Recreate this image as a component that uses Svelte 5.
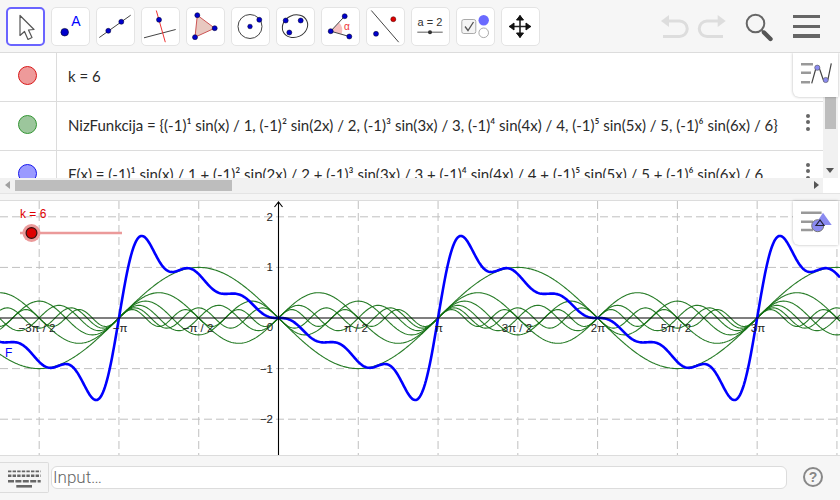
<script lang="ts">
	// graphics view geometry, px measured inside the 840x254 view
	const ox = 278.5;
	const oy = 117;
	const sx = 159.55 / Math.PI;
	const sy = 50.6;

	const term = (n: number, x: number) => (n % 2 ? -1 : 1) * Math.sin(n * x) / n;

	function plot(fn: (x: number) => number): string {
		let d = '';
		for (let px = 0; px <= 840; px += 1) {
			const y = oy - fn((px - ox) / sx) * sy;
			d += `${px ? 'L' : 'M'}${px} ${y.toFixed(2)}`;
		}
		return d;
	}

	const greens = [1, 2, 3, 4, 5, 6].map((n) => plot((x) => term(n, x)));
	const sum = plot((x) => term(1, x) + term(2, x) + term(3, x) + term(4, x) + term(5, x) + term(6, x));

	const gridX = [-6, -5, -4, -3, -2, -1, 1, 2, 3, 4, 5, 6, 7, 8, 9, 10].map((i) => ox + (i * 159.55) / 2);
	const gridY = [2, 1, -1, -2].map((v) => ({ v, y: oy - v * sy }));
	const xLabels = [
		{ t: '−3π / 2', x: 37 },
		{ t: '−π', x: 120 },
		{ t: '−π / 2', x: 198 },
		{ t: 'π / 2', x: 356 },
		{ t: 'π', x: 439 },
		{ t: '3π / 2', x: 517 },
		{ t: '2π', x: 598 },
		{ t: '5π / 2', x: 676 },
		{ t: '3π', x: 758 }
	];

	const rows = [
		{ color: 'red', text: 'k = 6', menu: false },
		{
			color: 'green',
			text: 'NizFunkcija = {(-1)¹ sin(x) / 1, (-1)² sin(2x) / 2, (-1)³ sin(3x) / 3, (-1)⁴ sin(4x) / 4, (-1)⁵ sin(5x) / 5, (-1)⁶ sin(6x) / 6}',
			menu: true
		},
		{
			color: 'blue',
			text: 'F(x) = (-1)¹ sin(x) / 1 + (-1)² sin(2x) / 2 + (-1)³ sin(3x) / 3 + (-1)⁴ sin(4x) / 4 + (-1)⁵ sin(5x) / 5 + (-1)⁶ sin(6x) / 6',
			menu: true
		}
	];
</script>

<div class="app">
	<header class="toolbar">
		<button class="tool active" aria-label="Move">
			<svg viewBox="0 0 39 39"><path d="M14 8.5 14 28.5 18.5 24.5 22 32.5 26 30.5 22.5 23 28 22.5Z" fill="#fff" stroke="#555" stroke-width="1.2" stroke-linejoin="round" /></svg>
		</button>
		<button class="tool" aria-label="Point">
			<svg viewBox="0 0 39 39"><circle cx="13.7" cy="25.2" r="3.8" fill="#00c" stroke="#002" stroke-width=".6" /><text x="25" y="18.5" class="icon-a">A</text></svg>
		</button>
		<button class="tool" aria-label="Line">
			<svg viewBox="0 0 39 39"><path d="M3.3 30.5 34.7 8.2" stroke="#444" fill="none" /><circle cx="12.3" cy="23.8" r="2.5" class="pt" /><circle cx="25.3" cy="14.8" r="2.5" class="pt" /></svg>
		</button>
		<button class="tool" aria-label="Perpendicular">
			<svg viewBox="0 0 39 39"><path d="M3 30.8 34.7 22.5" stroke="#444" fill="none" /><path d="M15.3 3.5 24.3 35.2" stroke="#e33" fill="none" /><circle cx="18" cy="12.8" r="2.5" class="pt" /></svg>
		</button>
		<button class="tool" aria-label="Polygon">
			<svg viewBox="0 0 39 39"><path d="M11.3 8.2 28.7 21.2 9 30.2Z" fill="#e8c8c0" stroke="#c55" /><circle cx="11.3" cy="8.2" r="2.5" class="pt" /><circle cx="28.7" cy="21.2" r="2.5" class="pt" /><circle cx="9" cy="30.2" r="2.5" class="pt" /></svg>
		</button>
		<button class="tool" aria-label="Circle">
			<svg viewBox="0 0 39 39"><circle cx="19" cy="19.5" r="12" fill="none" stroke="#444" /><circle cx="19" cy="19.5" r="2.3" class="pt" /><circle cx="28.3" cy="12.8" r="2.5" class="pt" /></svg>
		</button>
		<button class="tool" aria-label="Ellipse">
			<svg viewBox="0 0 39 39"><ellipse cx="19" cy="19.2" rx="13" ry="11" transform="rotate(-25 19 19.2)" fill="none" stroke="#333" /><circle cx="9.7" cy="13.5" r="2.5" class="pt" /><circle cx="24.7" cy="13.5" r="2.5" class="pt" /><circle cx="13.3" cy="25.5" r="2.5" class="pt" /></svg>
		</button>
		<button class="tool" aria-label="Angle">
			<svg viewBox="0 0 39 39"><path d="M9.7 24.2 18 15.5A11 11 0 0 1 20.5 27Z" fill="#f5c0c0" /><path d="M23.7 9.2 9.7 24.2 28.3 29.5" fill="none" stroke="#444" /><circle cx="23.7" cy="9.2" r="2.5" class="pt" /><circle cx="9.7" cy="24.2" r="2.5" class="pt" /><circle cx="28.3" cy="29.5" r="2.5" class="pt" /><text x="23" y="22.5" class="icon-alpha">α</text></svg>
		</button>
		<button class="tool" aria-label="Reflect">
			<svg viewBox="0 0 39 39"><path d="M5.3 3.5 32.7 35.2" stroke="#444" fill="none" /><circle cx="27.3" cy="12.2" r="2.5" fill="#d00" stroke="#400" stroke-width=".5" /><circle cx="10" cy="26.8" r="2.5" class="pt" /></svg>
		</button>
		<button class="tool" aria-label="Slider">
			<svg viewBox="0 0 39 39"><text x="19" y="18.5" class="icon-slider">a = 2</text><path d="M6.3 25.2H31.7" stroke="#777" stroke-width="1.2" /><circle cx="19" cy="25.2" r="2" fill="#333" /></svg>
		</button>
		<button class="tool" aria-label="Checkbox">
			<svg viewBox="0 0 39 39"><rect x="5.8" y="12.5" width="14" height="14" rx="2" fill="#f5f5f5" stroke="#aaa" /><path d="M9 19.5 12 23.5 17.5 15" fill="none" stroke="#555" stroke-width="1.3" /><circle cx="27.7" cy="13.2" r="5.2" fill="#6a6aff" /><circle cx="27.7" cy="25.8" r="4.8" fill="#fff" stroke="#aaa" /></svg>
		</button>
		<button class="tool" aria-label="Move view">
			<svg viewBox="0 0 39 39"><path d="M8 19.5H30M19 8.5V30.5" stroke="#222" stroke-width="1.6" /><path d="M19 8.5 15.5 13H22.5ZM19 30.5 15.5 26H22.5ZM8.5 19.5 13 16V23ZM29.5 19.5 25 16V23Z" fill="#111" stroke="#111" /></svg>
		</button>

		<div class="actions">
			<svg class="undo" viewBox="0 0 80 35" aria-hidden="true">
				<path d="M6 11 14 5V17Z" fill="#ddd" />
				<path d="M13 11H24.5A7.75 7.75 0 0 1 24.5 26.5H8" fill="none" stroke="#ddd" stroke-width="3" />
				<path d="M70.7 11 62.7 5V17Z" fill="#ddd" />
				<path d="M63 11H52A7.75 7.75 0 0 0 52 26.5H68" fill="none" stroke="#ddd" stroke-width="3" />
			</svg>
			<svg class="search" viewBox="0 0 30 30" aria-hidden="true">
				<circle cx="11.5" cy="10.5" r="8.8" fill="none" stroke="#666" stroke-width="2" />
				<path d="M18 17.5 26.5 26" stroke="#666" stroke-width="2" />
				<path d="M20 19.5 26.5 26" stroke="#555" stroke-width="4.4" stroke-linecap="round" />
			</svg>
			<div class="burger"><span></span><span></span><span></span></div>
		</div>
	</header>

	<section class="algebra">
		<div class="rows">
			{#each rows as row}
				<div class="row">
					<div class="marble-cell"><span class="marble {row.color}"></span></div>
					<div class="formula">{row.text}</div>
					{#if row.menu}
						<div class="dots"><i></i><i></i><i></i></div>
					{/if}
				</div>
			{/each}
		</div>
		<div class="vscroll">
			<div class="vthumb"></div>
			<span class="arrow-down"></span>
		</div>
		<div class="hscroll">
			<span class="arrow-left"></span>
			<div class="hthumb"></div>
			<span class="arrow-right"></span>
		</div>
		<button class="stylebar" aria-label="Algebra style bar">
			<svg viewBox="0 0 45 44">
				<path d="M8 11.3H20M8 19.7H18M8 29.3H17" stroke="#999" stroke-width="2.4" />
				<path d="M18.7 30.3 23 15C24 12.5 26 13 26.8 16.5L30 26C31 29 34 29 35 26L38.3 10.3" fill="none" stroke="#444" stroke-width="1.2" />
				<circle cx="24.3" cy="14.7" r="2.6" fill="#8a8af0" stroke="#555" stroke-width=".6" />
				<circle cx="32.7" cy="27" r="2.6" fill="#8a8af0" stroke="#555" stroke-width=".6" />
			</svg>
		</button>
	</section>

	<div class="splitter"></div>

	<section class="graphics">
		<svg class="plot" viewBox="0 0 840 254" aria-label="Graph of F">
			{#each gridX as x}
				<path d="M{x} 0V254" class="grid" />
			{/each}
			{#each gridY as g}
				<path d="M0 {g.y}H840" class="grid" />
			{/each}

			{#each greens as d}
				<path {d} class="green" />
			{/each}
			<path d={sum} class="sum" />

			<path d="M0 {oy}H840" class="axis" />
			<path d="M{ox} 254V1M{ox - 4} 6 {ox} 1 {ox + 4} 6" class="axis" fill="none" />

			{#each xLabels as l}
				<text x={l.x} y="131" class="tick">{l.t}</text>
			{/each}
			<text x="270" y="130" class="tick">0</text>
			{#each gridY as g}
				<text x="273" y={g.y + 4} class="tick end">{g.v < 0 ? '−' + -g.v : g.v}</text>
			{/each}

			<text x="5" y="156" class="label-f">F</text>
			<text x="20" y="17" class="label-k">k = 6</text>
			<path d="M20 32H122" stroke="#eb9a9a" stroke-width="2.4" />
			<circle cx="31.5" cy="32" r="9" fill="#eb9a9a" />
			<circle cx="31.5" cy="32" r="5.4" fill="#d00" stroke="#311" stroke-width="1.2" />
		</svg>
		<button class="stylebar" aria-label="Graphics style bar">
			<svg viewBox="0 0 45 44">
				<path d="M8 11.7H28.6M8 20.7H20M8 29H20" stroke="#999" stroke-width="2.4" />
				<circle cx="24.7" cy="24.7" r="6" fill="#8a8af0" stroke="#777" />
				<path d="M30 11.7 38.7 24H22Z" fill="#8a8af0" />
				<path d="M27 19 23 24.5H31Z" fill="none" stroke="#223" stroke-width="1.2" />
			</svg>
		</button>
	</section>

	<footer class="inputbar">
		<button class="keyboard" aria-label="Keyboard">
			<svg viewBox="0 0 34 26">
				<path d="M1 7.3H33.7" stroke="#666" stroke-width="1.8" stroke-dasharray="3.4 1.2" />
				<path d="M1 11.7H33.7" stroke="#666" stroke-width="2.6" stroke-dasharray="3.4 1.2" />
				<path d="M1 17.3H33.7" stroke="#666" stroke-width="2.6" stroke-dasharray="6 1.4" />
				<path d="M9.3 22.3H25" stroke="#666" stroke-width="2.6" />
			</svg>
		</button>
		<div class="input">Input…</div>
		<div class="help">?</div>
	</footer>
</div>

<style>
	:global(body) {
		margin: 0;
		background: #fff;
	}

	.app {
		width: 840px;
		height: 500px;
		display: flex;
		flex-direction: column;
		overflow: hidden;
		font-family: 'Liberation Sans', Arial, sans-serif;
	}

	.toolbar {
		height: 53px;
		box-sizing: border-box;
		flex: none;
		display: flex;
		align-items: flex-start;
		gap: 6px;
		padding: 6.5px 0 0 5.5px;
		background: #f6f6f6;
		border-bottom: 1px solid #dcdcdc;
	}

	.tool {
		width: 39px;
		height: 39px;
		flex: none;
		padding: 0;
		background: #fff;
		border: 1px solid #e4e4e4;
		border-radius: 5px;
		position: relative;
	}

	.tool svg {
		position: absolute;
		inset: -1px;
		width: 39px;
		height: 39px;
	}

	.tool.active {
		border: 2px solid #6a64ff;
	}

	.tool.active svg {
		inset: -2px;
	}

	.pt {
		fill: #00c;
		stroke: #002;
		stroke-width: 0.5;
	}

	.icon-a {
		font-size: 14px;
		fill: #00f;
		text-anchor: middle;
		font-family: 'Liberation Sans', sans-serif;
	}

	.icon-alpha {
		font-size: 10px;
		fill: #e33;
		font-family: 'Liberation Sans', sans-serif;
	}

	.icon-slider {
		font-size: 11px;
		fill: #333;
		text-anchor: middle;
		font-family: 'Liberation Sans', sans-serif;
	}

	.actions {
		margin-left: auto;
		display: flex;
		align-items: flex-start;
		padding-right: 20.3px;
	}

	.undo {
		width: 80px;
		height: 35px;
		margin-top: 3.5px;
		margin-right: 8.5px;
	}

	.search {
		width: 30px;
		height: 30px;
		margin-top: 6.3px;
		margin-right: 19.2px;
	}

	.burger {
		width: 27px;
		display: flex;
		flex-direction: column;
		gap: 6.3px;
		padding-top: 8.5px;
	}

	.burger span {
		height: 3.4px;
		background: #666;
	}

	.algebra {
		height: 140px;
		flex: none;
		position: relative;
		overflow: hidden;
		background: #fff;
	}

	.rows {
		height: 125px;
		width: 823px;
		overflow: hidden;
	}

	.row {
		height: 49px;
		box-sizing: border-box;
		border-bottom: 1px solid #dcdcdc;
		display: flex;
		align-items: center;
		position: relative;
	}

	.marble-cell {
		width: 57px;
		height: 100%;
		box-sizing: border-box;
		padding-bottom: 3px;
		flex: none;
		border-right: 1px solid #dcdcdc;
		display: flex;
		align-items: center;
		justify-content: center;
	}

	.marble {
		width: 17px;
		height: 17px;
		border-radius: 50%;
		border: 1.5px solid;
		margin-right: 2px;
	}

	.marble.red {
		background: #ee9a9a;
		border-color: #d81818;
	}

	.marble.green {
		background: #92c092;
		border-color: #1d8a1d;
	}

	.marble.blue {
		background: #9a9aff;
		border-color: #1818ee;
	}

	.formula {
		padding-left: 11px;
		margin-bottom: 3px;
		font-family: Lato, sans-serif;
		font-size: 15px;
		color: #2a2a2a;
		white-space: nowrap;
	}

	.dots {
		position: absolute;
		left: 806px;
		top: 12px;
		display: flex;
		flex-direction: column;
		gap: 2.4px;
	}

	.dots i {
		width: 4px;
		height: 4px;
		border-radius: 50%;
		background: #666;
	}

	.vscroll {
		position: absolute;
		right: 2px;
		top: 43px;
		width: 15px;
		height: 82px;
		background: #f1f1f1;
	}

	.vthumb {
		margin: 0 2px;
		height: 33px;
		background: #bdbdbd;
	}

	.arrow-down {
		position: absolute;
		left: 3px;
		bottom: 5px;
		border: 4px solid transparent;
		border-top: 5px solid #555;
		border-bottom: 0;
	}

	.hscroll {
		position: absolute;
		left: 0;
		top: 125px;
		width: 823px;
		height: 15px;
		background: #f1f1f1;
	}

	.hthumb {
		position: absolute;
		left: 15px;
		top: 2px;
		width: 217px;
		height: 11px;
		background: #bdbdbd;
	}

	.arrow-left,
	.arrow-right {
		position: absolute;
		top: 3px;
		border: 4px solid transparent;
	}

	.arrow-left {
		left: 5px;
		border-right: 5px solid #a0a0a0;
		border-left: 0;
	}

	.arrow-right {
		right: 4px;
		border-left: 5px solid #555;
		border-right: 0;
	}

	.stylebar {
		position: absolute;
		top: 0;
		right: 2px;
		width: 45px;
		height: 44px;
		padding: 0;
		background: #fff;
		border: none;
		border-bottom-left-radius: 6px;
		box-shadow: 0 0 3px rgba(0, 0, 0, 0.3);
	}

	.stylebar svg {
		display: block;
		width: 45px;
		height: 44px;
	}

	.splitter {
		height: 8px;
		flex: none;
		box-sizing: border-box;
		background: #f5f5f5;
		border-top: 1px solid #e4e4e4;
		border-bottom: 1px solid #dcdcdc;
	}

	.graphics {
		height: 254px;
		flex: none;
		position: relative;
		background: #fff;
	}

	.plot {
		display: block;
		width: 840px;
		height: 254px;
	}

	.grid {
		stroke: #c0c0c0;
		stroke-width: 1;
		stroke-dasharray: 8 4;
		fill: none;
	}

	.green {
		fill: none;
		stroke: #0f6e0f;
		stroke-width: 1.1;
		opacity: 0.9;
	}

	.sum {
		fill: none;
		stroke: #00f;
		stroke-width: 2.6;
		stroke-linejoin: round;
	}

	.axis {
		stroke: #000;
		stroke-width: 1.1;
	}

	.tick {
		font-size: 11.5px;
		fill: #222;
		text-anchor: middle;
	}

	.tick.end {
		text-anchor: end;
	}

	.label-f {
		font-size: 12px;
		fill: #00f;
	}

	.label-k {
		font-size: 12px;
		fill: #d00;
	}

	.inputbar {
		flex: 1;
		box-sizing: border-box;
		padding-bottom: 2px;
		display: flex;
		align-items: center;
		gap: 2px;
		background: #f6f6f6;
		border-top: 1px solid #dcdcdc;
	}

	.keyboard {
		width: 49px;
		height: 31px;
		flex: none;
		padding: 0;
		background: #f5f5f5;
		border: 1px solid #dcdcdc;
		border-left: none;
		border-radius: 0 2px 2px 0;
		display: flex;
		align-items: center;
		justify-content: center;
	}

	.keyboard svg {
		width: 34px;
		height: 26px;
	}

	.input {
		width: 736px;
		height: 23px;
		box-sizing: border-box;
		padding-left: 1px;
		background: #fff;
		border: 1px solid #dcdcdc;
		border-radius: 6px;
		font-size: 17px;
		font-family: Roboto, sans-serif;
		font-weight: 300;
		color: #666;
		line-height: 21px;
	}

	.help {
		width: 16px;
		height: 16px;
		margin-left: 14px;
		flex: none;
		border: 2px solid #888;
		border-radius: 50%;
		color: #888;
		font-size: 14px;
		font-weight: 700;
		line-height: 16px;
		text-align: center;
	}
</style>
